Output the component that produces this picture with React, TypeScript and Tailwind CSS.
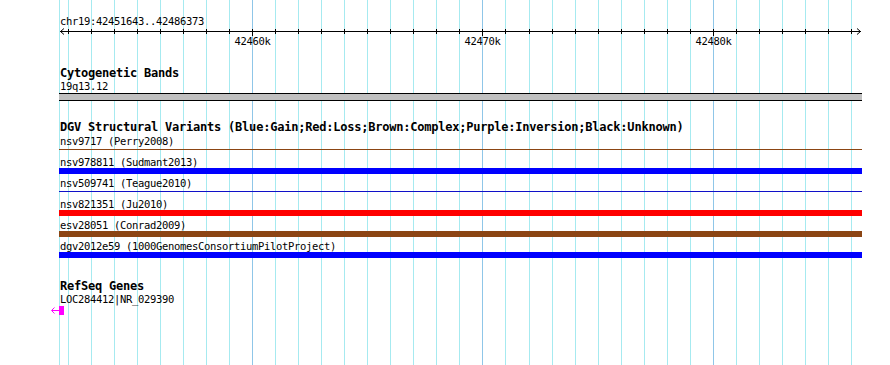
import React from "react";

// 1 kb grid, floor(68 + i * 23.05) px, first line at 42452k
const GRID = Array.from({ length: 35 }, (_, i) => ({
  x: Math.floor(68 + i * 23.05),
  kb: 42452 + i,
}));

const ORIGIN = 59;

type Variant = { label: string; kind: "thin" | "thick"; color: string };

const VARIANTS: Variant[] = [
  { label: "nsv9717 (Perry2008)", kind: "thin", color: "bg-[#8b4513]" },
  { label: "nsv978811 (Sudmant2013)", kind: "thick", color: "bg-[#0000ff]" },
  { label: "nsv509741 (Teague2010)", kind: "thin", color: "bg-[#1010c8]" },
  { label: "nsv821351 (Ju2010)", kind: "thick", color: "bg-[#ff0000]" },
  { label: "esv28051 (Conrad2009)", kind: "thick", color: "bg-[#8b4513]" },
  { label: "dgv2012e59 (1000GenomesConsortiumPilotProject)", kind: "thick", color: "bg-[#0000ff]" },
];

function TrackTitle({ children, className = "" }: { children: React.ReactNode; className?: string }) {
  return (
    <div className={`h-[13px] leading-[13px] text-[12px] tracking-[-0.22px] font-bold ml-px whitespace-nowrap ${className}`}>
      {children}
    </div>
  );
}

function Label({ children, className = "" }: { children: React.ReactNode; className?: string }) {
  return (
    <div className={`h-[12px] leading-[12px] text-[10.5px] tracking-[-0.32px] ml-px whitespace-nowrap ${className}`}>
      {children}
    </div>
  );
}

function Ruler() {
  return (
    <div className="relative h-[20px] w-[803px]">
      <svg width="803" height="12" className="absolute left-0 top-0" shapeRendering="crispEdges">
        <line x1="1" y1="4.5" x2="802" y2="4.5" stroke="#000" strokeWidth="1" />
        {GRID.map((g) => {
          const x = g.x - ORIGIN + 0.5;
          const major = g.kb % 10 === 0;
          return <line key={g.kb} x1={x} y1="2" x2={x} y2={major ? 9 : 7} stroke="#000" strokeWidth="1" />;
        })}
      </svg>
      <svg width="803" height="12" className="absolute left-0 top-0">
        <polyline points="5,1.5 1.5,4.5 5,7.5" fill="none" stroke="#000" strokeWidth="1" />
        <polyline points="798,1.5 801.5,4.5 798,7.5" fill="none" stroke="#000" strokeWidth="1" />
      </svg>
      {GRID.filter((g) => g.kb % 10 === 0).map((g) => (
        <span
          key={g.kb}
          className="absolute top-[8px] h-[12px] leading-[12px] text-[10.5px] tracking-[-0.32px] -translate-x-1/2 whitespace-nowrap"
          style={{ left: g.x - ORIGIN + 0.5 }}
        >
          {g.kb}k
        </span>
      ))}
    </div>
  );
}

function VariantRow({ v }: { v: Variant }) {
  return (
    <div className="h-[21px] flex flex-col">
      <Label>{v.label}</Label>
      {v.kind === "thick" ? (
        <div className={`h-[6px] w-[803px] ${v.color}`} />
      ) : (
        <div className={`mt-[2px] h-px w-[803px] ${v.color}`} />
      )}
    </div>
  );
}

export default function App() {
  return (
    <div className="relative w-[890px] h-[365px] bg-white overflow-hidden text-black font-['DejaVu_Sans_Mono',monospace]">
      {/* grid */}
      <div className="absolute inset-0">
        <div className="absolute top-0 bottom-0 w-px bg-[#a6eaf0]" style={{ left: ORIGIN }} />
        {GRID.map((g) => (
          <div
            key={g.kb}
            className={`absolute top-0 bottom-0 w-px ${g.kb % 10 === 0 ? "bg-[#8fc6e8]" : "bg-[#a6eaf0]"}`}
            style={{ left: g.x }}
          />
        ))}
      </div>

      <div className="relative flex flex-col pl-[59px] pt-[15px]">
        <Label>chr19:42451643..42486373</Label>
        <Ruler />

        <TrackTitle className="mt-[20px]">Cytogenetic Bands</TrackTitle>
        <Label>19q13.12</Label>
        <div className="mt-px h-[8px] w-[803px] border-y border-black bg-[#c0c0c0]" />

        <TrackTitle className="mt-[20px]">
          DGV Structural Variants (Blue:Gain;Red:Loss;Brown:Complex;Purple:Inversion;Black:Unknown)
        </TrackTitle>
        <div className="mt-px flex flex-col">
          {VARIANTS.map((v) => (
            <VariantRow key={v.label} v={v} />
          ))}
        </div>

        <TrackTitle className="mt-[19px]">RefSeq Genes</TrackTitle>
        <Label>LOC284412|NR_029390</Label>
        <div className="mt-px -ml-[8px] h-[9px]">
          <svg width="13" height="9" shapeRendering="crispEdges">
            <line x1="0.5" y1="4.5" x2="8" y2="4.5" stroke="#ff00ff" strokeWidth="1" />
            <rect x="8" y="0" width="5" height="9" fill="#ff00ff" />
          </svg>
        </div>
      </div>
      <svg width="6" height="9" className="absolute left-[51px] top-[306px]">
        <polyline points="3.5,1.5 0.5,4.5 3.5,7.5" fill="none" stroke="#ff00ff" strokeWidth="1" />
      </svg>
    </div>
  );
}
